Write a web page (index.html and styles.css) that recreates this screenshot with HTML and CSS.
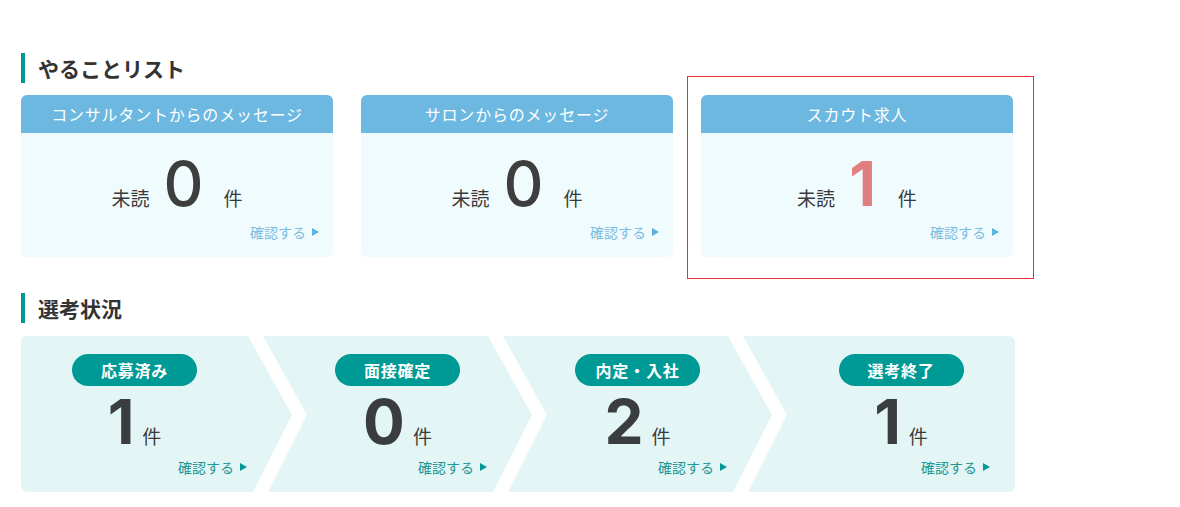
FILE: index.html
```html
<!DOCTYPE html>
<html lang="ja">
<head>
<meta charset="utf-8">
<title>やることリスト</title>
<link rel="stylesheet" href="styles.css">
</head>
<body>
<main class="page">
  <h2 class="sec-title">やることリスト</h2>
  <div class="todo-grid">
    <div class="todo-card">
      <div class="todo-head">コンサルタントからのメッセージ</div>
      <div class="todo-body">
        <div class="count"><span class="label">未読</span><span class="num">0</span><span class="unit">件</span></div>
        <a class="more more-blue" href="#">確認する<span class="tri"></span></a>
      </div>
    </div>
    <div class="todo-card">
      <div class="todo-head">サロンからのメッセージ</div>
      <div class="todo-body">
        <div class="count"><span class="label">未読</span><span class="num">0</span><span class="unit">件</span></div>
        <a class="more more-blue" href="#">確認する<span class="tri"></span></a>
      </div>
    </div>
    <div class="todo-card is-focus">
      <div class="todo-head">スカウト求人</div>
      <div class="todo-body">
        <div class="count"><span class="label">未読</span><span class="num num-red">1</span><span class="unit">件</span></div>
        <a class="more more-blue" href="#">確認する<span class="tri"></span></a>
      </div>
      <div class="focus-ring"></div>
    </div>
  </div>

  <h2 class="sec-title sec-title-2">選考状況</h2>
  <div class="status">
    <div class="seg seg-first">
      <div class="pill">応募済み</div>
      <div class="s-count"><span class="s-num">1</span><span class="s-unit">件</span></div>
      <a class="more more-teal" href="#">確認する<span class="tri"></span></a>
    </div>
    <svg class="chev" width="59" height="156" viewBox="0 0 59 156" aria-hidden="true"><polygon points="0,0 15,0 59,79 20,156 5,156 44,79" fill="#ffffff"/></svg>
    <div class="seg">
      <div class="pill">面接確定</div>
      <div class="s-count"><span class="s-num">0</span><span class="s-unit">件</span></div>
      <a class="more more-teal" href="#">確認する<span class="tri"></span></a>
    </div>
    <svg class="chev" width="59" height="156" viewBox="0 0 59 156" aria-hidden="true"><polygon points="0,0 15,0 59,79 20,156 5,156 44,79" fill="#ffffff"/></svg>
    <div class="seg">
      <div class="pill">内定・入社</div>
      <div class="s-count"><span class="s-num">2</span><span class="s-unit">件</span></div>
      <a class="more more-teal" href="#">確認する<span class="tri"></span></a>
    </div>
    <svg class="chev" width="59" height="156" viewBox="0 0 59 156" aria-hidden="true"><polygon points="0,0 15,0 59,79 20,156 5,156 44,79" fill="#ffffff"/></svg>
    <div class="seg seg-last">
      <div class="pill">選考終了</div>
      <div class="s-count"><span class="s-num">1</span><span class="s-unit">件</span></div>
      <a class="more more-teal" href="#">確認する<span class="tri"></span></a>
    </div>
  </div>
</main>
</body>
</html>
```

FILE: styles.css
```css
html, body {
  margin: 0;
  padding: 0;
  background: #ffffff;
}
body {
  font-family: "Noto Sans CJK JP", "Noto Sans", sans-serif;
  color: #3a3a3a;
}
.page {
  padding: 53px 0 0 21px;
  width: 994px;
}
.sec-title {
  margin: 0;
  height: 30px;
  line-height: 30px;
  border-left: 4px solid #009a96;
  padding-left: 13px;
  font-size: 21px;
  font-weight: 700;
  color: #333333;
}
.sec-title-2 {
  margin-top: 36px;
}
.todo-grid {
  margin-top: 12px;
  display: grid;
  grid-template-columns: 312px 312px 312px;
  column-gap: 28px;
  width: 994px;
}
.todo-card {
  position: relative;
  border-radius: 6px;
  background: #f0fbfd;
  height: 162px;
}
.todo-head {
  height: 38px;
  line-height: 38px;
  background: #6cb8e1;
  color: #ffffff;
  text-align: center;
  font-size: 16px;
  letter-spacing: 0.05em;
  border-radius: 6px 6px 0 0;
}
.todo-body {
  height: 124px;
  box-sizing: border-box;
  padding: 22px 14px 0;
  display: flex;
  flex-direction: column;
}
.count {
  display: flex;
  justify-content: center;
  align-items: baseline;
  height: 58px;
  line-height: 58px;
}
.label, .unit {
  font-size: 19px;
}
.num {
  font-family: Inter, Roboto, sans-serif;
  font-weight: 500;
  font-size: 62px;
  margin: 0 20px 0 14px;
  color: #3e3e3e;
}
.num-red {
  color: #e07e80;
  font-weight: 700;
  margin: 0 22px 0 14px;
}
.more {
  display: flex;
  align-items: center;
  justify-content: flex-end;
  font-size: 14px;
  text-decoration: none;
  line-height: 20px;
}
.todo-body .more {
  margin-top: 9px;
}
.more-blue {
  color: #7cbde0;
}
.more-teal {
  color: #1c9893;
}
.tri {
  display: inline-block;
  width: 0;
  height: 0;
  border-left: 7px solid currentColor;
  border-top: 4px solid transparent;
  border-bottom: 4px solid transparent;
  margin-left: 6px;
}
.more-blue .tri {
  border-left-color: #5fb0de;
}
.more-teal .tri {
  border-left-color: #009a96;
}
.focus-ring {
  position: absolute;
  top: -19px;
  left: -14px;
  right: -21px;
  bottom: -22px;
  border: 1px solid #ee2e33;
  pointer-events: none;
}
.status {
  margin-top: 13px;
  display: flex;
  height: 156px;
  background: #e3f5f5;
  border-radius: 6px;
  overflow: hidden;
}
.seg {
  width: 181px;
  flex: none;
  display: flex;
  flex-direction: column;
  align-items: center;
  padding-top: 18px;
  box-sizing: border-box;
}
.seg-first {
  width: 227px;
}
.seg-last {
  width: 228px;
}
.chev {
  flex: none;
  display: block;
}
.pill {
  width: 125px;
  height: 32px;
  line-height: 32px;
  border-radius: 16px;
  background: #009a96;
  color: #ffffff;
  text-align: center;
  font-size: 16px;
  font-weight: 700;
  letter-spacing: 0.05em;
}
.s-count {
  display: flex;
  align-items: baseline;
  justify-content: center;
  height: 60px;
  line-height: 60px;
  margin-top: 6px;
}
.s-num {
  font-family: Inter, Roboto, sans-serif;
  font-weight: 700;
  font-size: 62px;
  color: #3a3d40;
  margin-right: 8px;
}
.s-unit {
  font-size: 19px;
}
.seg .more {
  align-self: flex-end;
  margin-top: 5px;
  margin-right: 1px;
}
.seg-last .more {
  margin-right: 25px;
}
```
